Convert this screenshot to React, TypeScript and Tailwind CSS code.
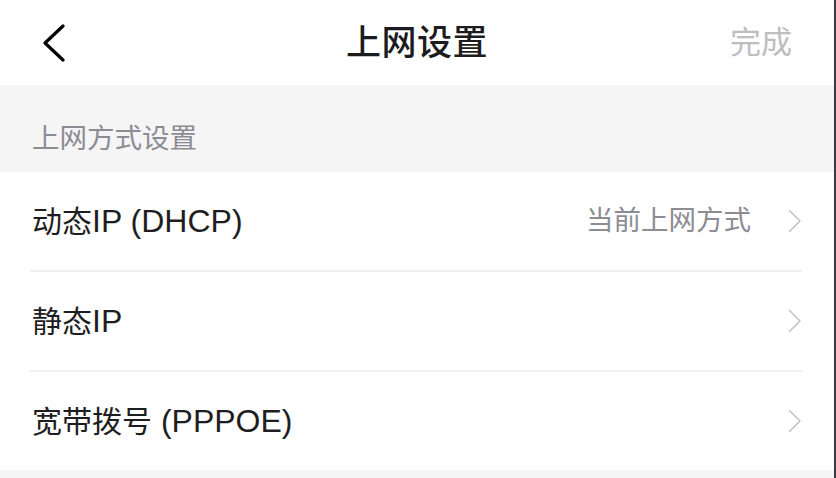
import React from "react";

const font = { fontFamily: '"Liberation Sans", "Noto Sans CJK SC", sans-serif' };

function Chevron() {
  return (
    <svg width="14" height="24" viewBox="0 0 14 24" className="shrink-0">
      <path d="M1.5 1.5 L12 12 L1.5 22.5" fill="none" stroke="#c4c4c8" strokeWidth="1.6" strokeLinecap="round" strokeLinejoin="round" />
    </svg>
  );
}

function Row({ cjk, latin, value, last }: { cjk: string; latin: string; value?: string; last?: boolean }) {
  return (
    <div className={last ? "ml-[30px] mr-[32px] h-[98px] flex items-center" : "ml-[30px] mr-[32px] h-[100px] flex items-center border-b-2 border-[#f0f0f2]"}>
      <div className="flex-1 pl-[2px] text-[30px] leading-[36px] text-[#1e1e22]">
        {cjk}
        <span className="text-[32px]">{latin}</span>
      </div>
      {value && <div className="text-[27.5px] leading-[34px] text-[#8c8c92] mr-[37px]">{value}</div>}
      <Chevron />
    </div>
  );
}

export default function App() {
  return (
    <div className="w-[836px] h-[478px] flex bg-white overflow-hidden" style={font}>
      <div className="w-[834px] flex flex-col">
        <div className="h-[85px] grid grid-cols-[1fr_auto_1fr] items-center bg-white">
          <div className="pl-[42px] flex items-center">
            <svg width="24" height="38" viewBox="0 0 24 38">
              <path d="M21 2 L3 19 L21 36" fill="none" stroke="#000" strokeWidth="3.2" strokeLinecap="round" strokeLinejoin="round" />
            </svg>
          </div>
          <div className="text-[35px] leading-[40px] font-medium text-[#1c1c20] tracking-[0.5px]">上网设置</div>
          <div className="flex justify-end pr-[42px] text-[31px] leading-[36px] text-[#bdbdc2]">完成</div>
        </div>
        <div className="h-[87px] bg-[#f5f5f5] flex items-center pt-[20px] pl-[32px] text-[27.5px] leading-[34px] text-[#8c8c94]">
          上网方式设置
        </div>
        <div className="bg-white">
          <Row cjk="动态" latin="IP (DHCP)" value="当前上网方式" />
          <Row cjk="静态" latin="IP" />
          <Row cjk="宽带拨号" latin=" (PPPOE)" last />
        </div>
        <div className="flex-1 bg-[#f5f5f5]" />
      </div>
      <div className="w-[2px] bg-[#3a3a3c]" />
    </div>
  );
}
